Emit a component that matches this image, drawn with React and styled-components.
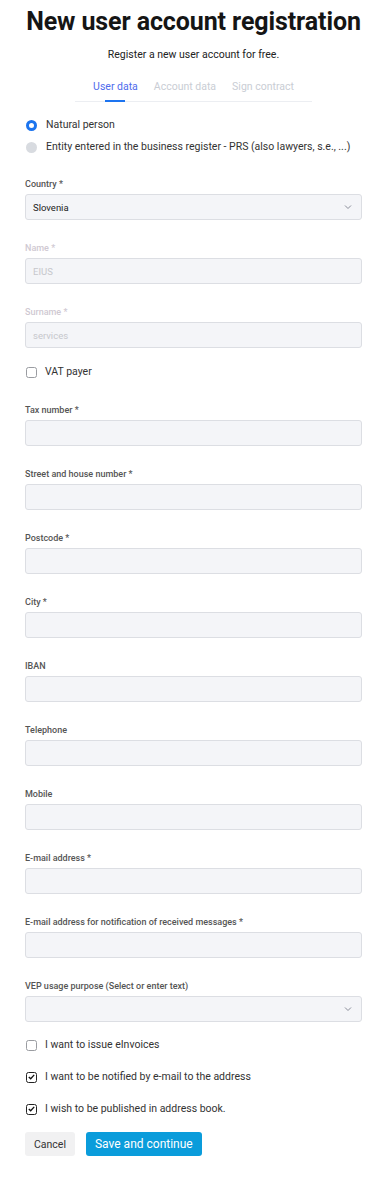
import React from 'react';
import styled, { createGlobalStyle } from 'styled-components';

const GlobalStyle = createGlobalStyle`
    body {
        margin: 0;
        background: #fff;
        font-family: Roboto, "Liberation Sans", Arial, sans-serif;
        color: #222;
    }
`;

const Page = styled.div`
    padding: 6px 22px 20px 25px;
`;

const Title = styled.h1`
    margin: 0;
    font-size: 25px;
    line-height: 31px;
    font-weight: 700;
    color: #151515;
    text-align: center;
    letter-spacing: -0.1px;
`;

const Subtitle = styled.p`
    margin: 11px 0 0;
    font-size: 10.5px;
    line-height: 14px;
    text-align: center;
    color: #222;
`;

const Tabs = styled.div`
    display: flex;
    justify-content: center;
    gap: 16px;
    margin: 18px 50px 0 50px;
    border-bottom: 1px solid #eceef2;
`;

const Tab = styled.div`
    position: relative;
    font-size: 10.5px;
    line-height: 14px;
    padding-bottom: 7px;
    color: ${(p) => (p.$active ? '#4f6bed' : '#c9cdd4')};

    &::after {
        content: '';
        display: ${(p) => (p.$active ? 'block' : 'none')};
        position: absolute;
        left: 12px;
        right: 13px;
        bottom: -1px;
        height: 2px;
        background: #1d74f0;
    }
`;

const RadioGroup = styled.div`
    display: flex;
    flex-direction: column;
    gap: 8px;
    margin-top: 16px;
`;

const RadioRow = styled.label`
    display: flex;
    align-items: center;
    gap: 9px;
    font-size: 10.5px;
    line-height: 14px;
    color: #333;
`;

const RadioDot = styled.span`
    width: 11px;
    height: 11px;
    border-radius: 50%;
    box-sizing: border-box;
    background: ${(p) => (p.$checked ? '#fff' : '#d8dbe0')};
    border: ${(p) => (p.$checked ? '3.5px solid #1c74ee' : 'none')};
    flex-shrink: 0;
    margin-left: 1px;
`;

const Fields = styled.div`
    display: flex;
    flex-direction: column;
    gap: 22px;
    margin-top: ${(p) => p.$mt || 0}px;
`;

const Field = styled.div`
    display: flex;
    flex-direction: column;
    gap: 4px;
`;

const Label = styled.div`
    font-size: 9px;
    line-height: 12px;
    font-weight: 500;
    color: ${(p) => (p.$disabled ? '#cfc9d2' : '#555')};
`;

const InputBox = styled.div`
    position: relative;
    height: 26px;
    box-sizing: border-box;
    background: #f4f5f8;
    border: 1px solid #dcdee3;
    border-radius: 3px;
    display: flex;
    align-items: center;
    padding: 0 7px;
    font-size: 9.5px;
    color: ${(p) => (p.$disabled ? '#c6c7cc' : '#222')};
`;

const Chevron = styled.svg`
    position: absolute;
    right: 9px;
    top: 50%;
    margin-top: -3px;
    width: 8px;
    height: 6px;
`;

const CheckRow = styled.label`
    display: flex;
    align-items: center;
    gap: 8px;
    font-size: 10.5px;
    line-height: 14px;
    color: #333;
    margin-top: ${(p) => p.$mt || 0}px;
`;

const Box = styled.span`
    width: 11px;
    height: 11px;
    box-sizing: border-box;
    border: 1px solid ${(p) => (p.$checked ? '#222' : '#9a9ca1')};
    border-radius: 2.5px;
    display: flex;
    align-items: center;
    justify-content: center;
    margin-left: 1px;
    flex-shrink: 0;
`;

const Buttons = styled.div`
    display: flex;
    gap: 11px;
    margin-top: 16px;
`;

const Button = styled.button`
    height: 24px;
    border: none;
    border-radius: 3px;
    font-family: inherit;
    font-size: ${(p) => (p.$primary ? '12px' : '10.5px')};
    padding: 0 9px;
    background: ${(p) => (p.$primary ? '#0a9cdb' : '#f1f1f2')};
    color: ${(p) => (p.$primary ? '#fff' : '#333')};
    cursor: pointer;
`;

const ChevronIcon = () => (
    <Chevron viewBox="0 0 8 6">
        <path d="M1 1.5 L4 4.5 L7 1.5" fill="none" stroke="#8a8d99" strokeWidth="1" />
    </Chevron>
);

const Check = ({ checked }) => (
    <Box $checked={checked}>
        {checked && (
            <svg width="7" height="6" viewBox="0 0 7 6">
                <path d="M0.8 3 L2.7 4.8 L6.2 0.9" fill="none" stroke="#111" strokeWidth="1.3" />
            </svg>
        )}
    </Box>
);

const fields = [
    { label: 'Tax number *' },
    { label: 'Street and house number *' },
    { label: 'Postcode *' },
    { label: 'City *' },
    { label: 'IBAN' },
    { label: 'Telephone' },
    { label: 'Mobile' },
    { label: 'E-mail address *' },
    { label: 'E-mail address for notification of received messages *' },
];

const App = () => {
    return (
        <Page>
            <GlobalStyle />
            <Title>New user account registration</Title>
            <Subtitle>Register a new user account for free.</Subtitle>
            <Tabs>
                <Tab $active>User data</Tab>
                <Tab>Account data</Tab>
                <Tab>Sign contract</Tab>
            </Tabs>

            <RadioGroup>
                <RadioRow>
                    <RadioDot $checked />
                    Natural person
                </RadioRow>
                <RadioRow>
                    <RadioDot />
                    Entity entered in the business register - PRS (also lawyers, s.e., ...)
                </RadioRow>
            </RadioGroup>

            <Fields $mt={24}>
                <Field>
                    <Label>Country *</Label>
                    <InputBox>
                        Slovenia
                        <ChevronIcon />
                    </InputBox>
                </Field>
                <Field>
                    <Label $disabled>Name *</Label>
                    <InputBox $disabled>EIUS</InputBox>
                </Field>
                <Field>
                    <Label $disabled>Surname *</Label>
                    <InputBox $disabled>services</InputBox>
                </Field>
            </Fields>

            <CheckRow $mt={17}>
                <Check />
                VAT payer
            </CheckRow>

            <Fields $mt={25}>
                {fields.map((f) => (
                    <Field key={f.label}>
                        <Label>{f.label}</Label>
                        <InputBox />
                    </Field>
                ))}
                <Field>
                    <Label>VEP usage purpose (Select or enter text)</Label>
                    <InputBox>
                        <ChevronIcon />
                    </InputBox>
                </Field>
            </Fields>

            <CheckRow $mt={16}>
                <Check />
                I want to issue eInvoices
            </CheckRow>
            <CheckRow $mt={18}>
                <Check checked />
                I want to be notified by e-mail to the address
            </CheckRow>
            <CheckRow $mt={18}>
                <Check checked />
                I wish to be published in address book.
            </CheckRow>

            <Buttons>
                <Button>Cancel</Button>
                <Button $primary>Save and continue</Button>
            </Buttons>
        </Page>
    );
};

export default App;
